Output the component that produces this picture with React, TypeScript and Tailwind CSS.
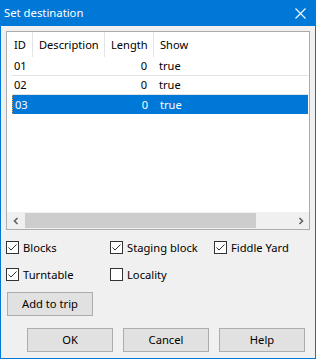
import { useState } from "react";

type Row = { id: string; description: string; length: number; show: boolean };

const rows: Row[] = [
  { id: "01", description: "", length: 0, show: true },
  { id: "02", description: "", length: 0, show: true },
  { id: "03", description: "", length: 0, show: true },
];

const CheckBox = ({ label, checked }: { label: string; checked: boolean }) => (
  <label className="flex items-center h-[13px] gap-[4px]">
    <span className="w-[13px] h-[13px] border border-[#333333] bg-white flex items-center justify-center shrink-0">
      {checked && (
        <svg width="11" height="11" viewBox="0 0 11 11" fill="none">
          <path d="M1.5 5.5L4 8L9.5 2.5" stroke="#333333" strokeWidth="1" />
        </svg>
      )}
    </span>
    <span className="text-[11.2px] text-black whitespace-nowrap">{label}</span>
  </label>
);

const Button = ({ label }: { label: string }) => (
  <button className="w-[86px] h-[24px] bg-[#e1e1e1] border border-[#adadad] text-[11.2px] text-black flex items-center justify-center">
    {label}
  </button>
);

const App = () => {
  const [selected] = useState(2);

  return (
    <div className="w-[316px] h-[359px] bg-[#0078d7] flex flex-col font-['Noto_Sans',sans-serif] text-[11.1px] leading-none">
      {/* title bar */}
      <div className="h-[26px] flex items-center pl-[4px] pr-[10px] text-white shrink-0">
        <span className="flex-1 text-[11.3px]">Set destination</span>
        <svg width="11" height="11" viewBox="0 0 11 11" fill="none">
          <path d="M0.5 0.5L10.5 10.5M10.5 0.5L0.5 10.5" stroke="white" strokeWidth="1.1" />
        </svg>
      </div>

      <div className="flex-1 mx-px mb-px bg-[#f0f0f0] flex flex-col pl-[5px] pt-[5px]">
        {/* list view */}
        <div className="w-[304px] h-[199px] border border-[#adadad] bg-white flex flex-col text-black">
          <div className="h-[25px] flex shrink-0">
            <div className="w-[26px] border-r border-[#e5e5e5] flex items-center pl-[7px]">ID</div>
            <div className="w-[72px] border-r border-[#e5e5e5] flex items-center pl-[6px]">Description</div>
            <div className="w-[49px] border-r border-[#e5e5e5] flex items-center pl-[6px]">Length</div>
            <div className="flex-1 flex items-center pl-[6px]">Show</div>
          </div>

          {rows.map((row, i) => (
            <div
              key={row.id}
              className={
                i === selected
                  ? "ml-[5px] w-[296px] h-[19px] flex items-center bg-[#0078d7] text-white border-l border-dotted border-[#e89a3c]"
                  : "ml-[5px] w-[296px] h-[19px] flex items-center border-b border-[#e3e3e3]"
              }
            >
              <div className="w-[93px] pl-[2px]">{row.id}</div>
              <div className="w-[48px] text-right pr-[6px]">{row.length}</div>
              <div className="flex-1 pl-[6px]">{row.show ? "true" : "false"}</div>
            </div>
          ))}

          <div className="flex-1" />

          {/* horizontal scrollbar */}
          <div className="h-[17px] bg-[#f0f0f0] flex items-center shrink-0">
            <div className="w-[17px] h-[17px] flex items-center justify-center">
              <svg width="8" height="8" viewBox="0 0 8 8" fill="none">
                <path d="M5.5 1L2.5 4L5.5 7" stroke="#606060" strokeWidth="1.6" />
              </svg>
            </div>
            <div className="flex-1 h-[15px] flex items-center pl-px">
              <div className="w-[231px] h-[15px] bg-[#cdcdcd]" />
            </div>
            <div className="w-[17px] h-[17px] flex items-center justify-center">
              <svg width="8" height="8" viewBox="0 0 8 8" fill="none">
                <path d="M2.5 1L5.5 4L2.5 7" stroke="#606060" strokeWidth="1.6" />
              </svg>
            </div>
          </div>
        </div>

        {/* filters */}
        <div className="mt-[11px] grid grid-cols-[104px_104px_auto] gap-y-[14px]">
          <CheckBox label="Blocks" checked />
          <CheckBox label="Staging block" checked />
          <CheckBox label="Fiddle Yard" checked />
          <CheckBox label="Turntable" checked />
          <CheckBox label="Locality" checked={false} />
        </div>

        <div className="mt-[11px] ml-px">
          <Button label="Add to trip" />
        </div>

        <div className="mt-[12px] ml-[21px] flex gap-[10px]">
          <Button label="OK" />
          <Button label="Cancel" />
          <Button label="Help" />
        </div>
      </div>
    </div>
  );
};

export default App;
